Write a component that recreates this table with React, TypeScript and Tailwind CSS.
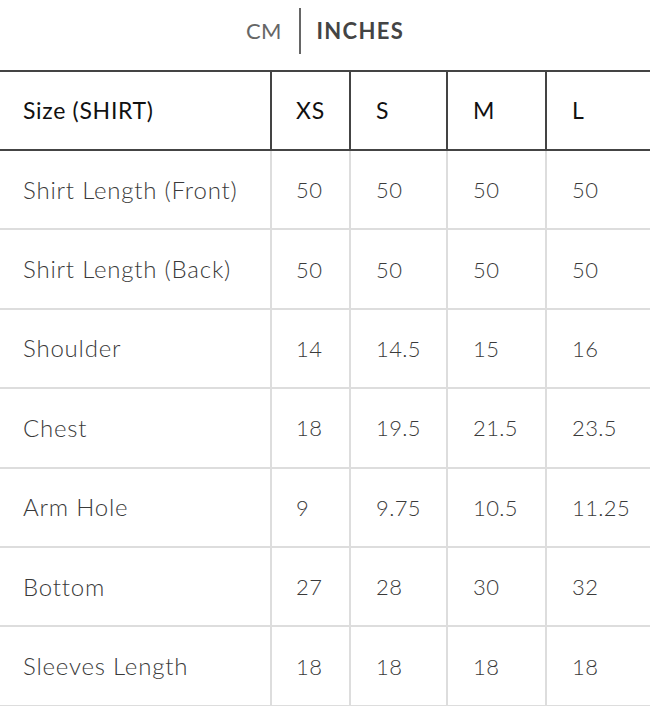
import React from "react";

const rows: [string, string, string, string, string][] = [
  ["Shirt Length (Front)", "50", "50", "50", "50"],
  ["Shirt Length (Back)", "50", "50", "50", "50"],
  ["Shoulder", "14", "14.5", "15", "16"],
  ["Chest", "18", "19.5", "21.5", "23.5"],
  ["Arm Hole", "9", "9.75", "10.5", "11.25"],
  ["Bottom", "27", "28", "30", "32"],
  ["Sleeves Length", "18", "18", "18", "18"],
];

const cols = "grid grid-cols-[272px_79px_97px_99px_1fr]";

export default function App() {
  return (
    <div className="w-[650px] h-[706px] overflow-hidden bg-white" style={{ fontFamily: "Lato, 'Noto Sans', sans-serif" }}>
      <div className="h-[70px] flex items-center justify-center pb-[9px]">
        <span className="text-[22px] text-[#666] tracking-[0.2px]">CM</span>
        <span className="ml-[17px] mr-[16px] w-[2px] h-[46px] bg-[#666]"></span>
        <span className="text-[22px] font-bold text-[#444] tracking-[1.3px]">INCHES</span>
      </div>
      <div className={`${cols} border-y-2 border-[#444] h-[81px] text-[23px] text-[#111] tracking-[0.7px]`}>
        <div className="border-r-2 border-[#444] flex items-center pl-[23px]">Size (SHIRT)</div>
        <div className="border-r-2 border-[#444] flex items-center pl-[24px]">XS</div>
        <div className="border-r-2 border-[#444] flex items-center pl-[25px]">S</div>
        <div className="border-r-2 border-[#444] flex items-center pl-[25px]">M</div>
        <div className="flex items-center pl-[25px]">L</div>
      </div>
      {rows.map((r, i) => (
        <div key={i} className={`${cols} border-b-2 border-[#dddddd] h-[79.4px] text-[#3a3a3a] font-light`}>
          <div className="border-r-2 border-[#dddddd] flex items-center pl-[23px] text-[24px] tracking-[0.8px]">{r[0]}</div>
          <div className="border-r-2 border-[#dddddd] flex items-center pl-[24px] text-[22px] tracking-[0.4px]">{r[1]}</div>
          <div className="border-r-2 border-[#dddddd] flex items-center pl-[25px] text-[22px] tracking-[0.4px]">{r[2]}</div>
          <div className="border-r-2 border-[#dddddd] flex items-center pl-[25px] text-[22px] tracking-[0.4px]">{r[3]}</div>
          <div className="flex items-center pl-[25px] text-[22px] tracking-[0.4px]">{r[4]}</div>
        </div>
      ))}
    </div>
  );
}
